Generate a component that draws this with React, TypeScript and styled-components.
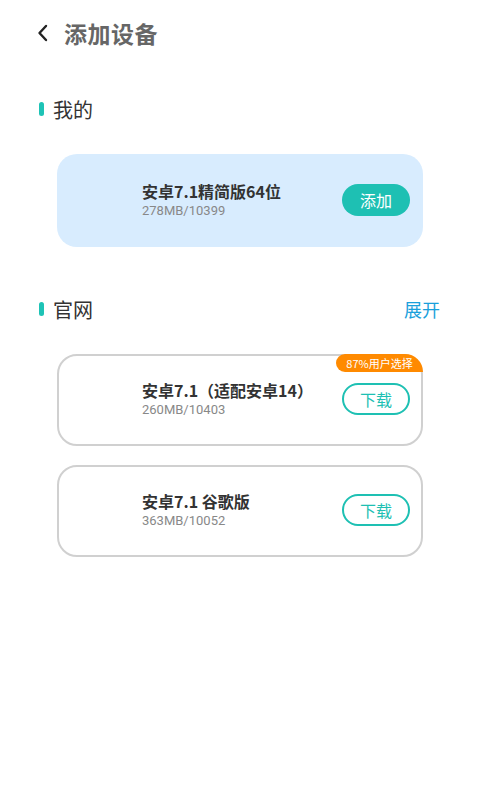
import React from "react";
import styled, { createGlobalStyle } from "styled-components";

const GlobalStyle = createGlobalStyle`
  body {
    margin: 0;
    background: #ffffff;
    font-family: "Noto Sans CJK SC", "Noto Sans", Roboto, sans-serif;
  }
`;

const Page = styled.div`
  width: 480px;
  min-height: 811px;
  background: #fff;
  box-sizing: border-box;
`;

const Header = styled.header`
  display: flex;
  align-items: center;
  height: 66px;
  padding-left: 32px;
  box-sizing: border-box;
`;

const BackButton = styled.button`
  display: flex;
  align-items: center;
  justify-content: center;
  width: 22px;
  height: 22px;
  padding: 0;
  border: none;
  background: none;
  margin-right: 10px;
`;

const Title = styled.h1`
  margin: 0;
  font-size: 23px;
  font-weight: 700;
  color: #666666;
  letter-spacing: 0.5px;
`;

const Section = styled.section<{ $top: number }>`
  padding: ${(p) => p.$top}px 40px 0 39px;
`;

const SectionHead = styled.div`
  display: flex;
  align-items: center;
  justify-content: space-between;
  height: 30px;
`;

const SectionLabel = styled.div`
  display: flex;
  align-items: center;
  gap: 9px;
  font-size: 20px;
  color: #333333;
`;

const Accent = styled.span`
  width: 5px;
  height: 14px;
  border-radius: 3px;
  background: #1ec3b6;
`;

const Expand = styled.a`
  font-size: 18px;
  color: #1aa0db;
  text-decoration: none;
`;

const CardList = styled.div`
  display: flex;
  flex-direction: column;
  gap: 19px;
  padding: 0 17px 0 18px;
  margin-top: 30px;
`;

const Card = styled.div<{ $filled?: boolean }>`
  position: relative;
  display: flex;
  align-items: center;
  height: ${(p) => (p.$filled ? 93 : 92)}px;
  box-sizing: border-box;
  border-radius: 20px;
  padding: 0 ${(p) => (p.$filled ? 13 : 11)}px 2px ${(p) => (p.$filled ? 85 : 83)}px;
  background: ${(p) => (p.$filled ? "#d8ecfe" : "#ffffff")};
  border: ${(p) => (p.$filled ? "none" : "2px solid #d0d0d0")};
`;

const Info = styled.div`
  flex: 1;
  display: flex;
  flex-direction: column;
  gap: 2px;
`;

const Name = styled.div`
  font-size: 16px;
  font-weight: 700;
  color: #333333;
  line-height: 20px;
`;

const Meta = styled.div`
  font-family: Roboto, "Noto Sans", sans-serif;
  font-size: 13px;
  color: #888888;
  line-height: 16px;
`;

const ActionButton = styled.button<{ $outline?: boolean }>`
  width: 68px;
  height: 32px;
  border-radius: 16px;
  box-sizing: border-box;
  font-family: "Noto Sans CJK SC", sans-serif;
  font-size: 16px;
  padding: 0;
  cursor: pointer;
  background: ${(p) => (p.$outline ? "#ffffff" : "#1ec0b3")};
  color: ${(p) => (p.$outline ? "#1ec0b3" : "#ffffff")};
  border: ${(p) => (p.$outline ? "2px solid #1ec0b3" : "none")};
`;

const Badge = styled.div`
  position: absolute;
  top: -2px;
  right: -2px;
  width: 87px;
  height: 18px;
  display: flex;
  align-items: center;
  justify-content: center;
  background: #ff8a00;
  color: #ffffff;
  font-size: 11px;
  border-radius: 10px 20px 0 10px;
`;

type Device = {
  name: string;
  meta: string;
  badge?: string;
};

const official: Device[] = [
  { name: "安卓7.1（适配安卓14）", meta: "260MB/10403", badge: "87%用户选择" },
  { name: "安卓7.1 谷歌版", meta: "363MB/10052" },
];

export default function App() {
  return (
    <>
      <GlobalStyle />
      <Page>
        <Header>
          <BackButton aria-label="返回">
            <svg width="14" height="20" viewBox="0 0 14 20" fill="none">
              <path
                d="M10 3L3.5 10L10 17"
                stroke="#222"
                strokeWidth="2.4"
                strokeLinecap="round"
                strokeLinejoin="round"
              />
            </svg>
          </BackButton>
          <Title>添加设备</Title>
        </Header>

        <Section $top={28}>
          <SectionHead>
            <SectionLabel>
              <Accent />
              我的
            </SectionLabel>
          </SectionHead>
          <CardList>
            <Card $filled>
              <Info>
                <Name>安卓7.1精简版64位</Name>
                <Meta>278MB/10399</Meta>
              </Info>
              <ActionButton>添加</ActionButton>
            </Card>
          </CardList>
        </Section>

        <Section $top={47}>
          <SectionHead>
            <SectionLabel>
              <Accent />
              官网
            </SectionLabel>
            <Expand>展开</Expand>
          </SectionHead>
          <CardList>
            {official.map((d) => (
              <Card key={d.name}>
                {d.badge && <Badge>{d.badge}</Badge>}
                <Info>
                  <Name>{d.name}</Name>
                  <Meta>{d.meta}</Meta>
                </Info>
                <ActionButton $outline>下载</ActionButton>
              </Card>
            ))}
          </CardList>
        </Section>
      </Page>
    </>
  );
}
